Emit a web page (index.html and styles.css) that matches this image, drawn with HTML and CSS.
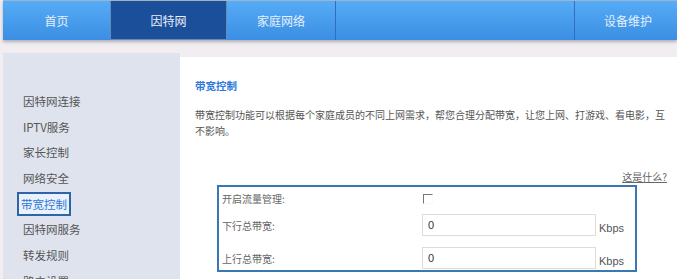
FILE: index.html
```html
<!DOCTYPE html>
<html lang="zh-CN">
<head>
<meta charset="utf-8">
<title>带宽控制</title>
<link rel="stylesheet" href="styles.css">
</head>
<body>
<div class="nav">
  <div class="tab t1">首页</div>
  <div class="tab t2 active">因特网</div>
  <div class="tab t3">家庭网络</div>
  <div class="tab spacer"></div>
  <div class="tab t4">设备维护</div>
</div>
<div class="main">
  <div class="side">
    <div class="item">因特网连接</div>
    <div class="item">IPTV服务</div>
    <div class="item">家长控制</div>
    <div class="item">网络安全</div>
    <div class="item"><span class="sel">带宽控制</span></div>
    <div class="item">因特网服务</div>
    <div class="item">转发规则</div>
    <div class="item">路由设置</div>
  </div>
  <div class="content">
    <div class="title">带宽控制</div>
    <div class="desc">带宽控制功能可以根据每个家庭成员的不同上网需求，帮您合理分配带宽，让您上网、打游戏、看电影，互不影响。</div>
    <div class="help"><a href="#">这是什么?</a></div>
    <div class="form">
      <div class="row r1">
        <div class="label">开启流量管理:</div>
        <span class="chk"></span>
      </div>
      <div class="row r2">
        <div class="label">下行总带宽:</div>
        <input class="inp" type="text" value="0">
        <span class="unit">Kbps</span>
      </div>
      <div class="row r3">
        <div class="label">上行总带宽:</div>
        <input class="inp" type="text" value="0">
        <span class="unit">Kbps</span>
      </div>
    </div>
  </div>
</div>
</body>
</html>
```

FILE: styles.css
```css
html, body {
  margin: 0;
  padding: 0;
  background: #f1edf1;
  font-family: "Noto Sans CJK SC", "Liberation Sans", sans-serif;
  overflow: hidden;
}
.nav {
  margin-left: 3px;
  height: 40px;
  display: flex;
  background: linear-gradient(#56acf6, #3b8ee3);
  border-top: 1px solid #9cb4cf;
  box-sizing: border-box;
  box-shadow: 0 2px 3px rgba(90, 100, 120, 0.45);
  position: relative;
}
.tab {
  color: #e6effc;
  font-size: 12px;
  display: flex;
  align-items: center;
  justify-content: center;
  height: 39px;
  box-sizing: border-box;
}
.t1 { width: 107px; }
.t2 { width: 117px; }
.t3 { border-right: 1px solid #2f6fbe; width: 109px; }
.spacer { width: 239px; border-right: 1px solid #2f6fbe; }
.t4 { flex: 1; padding-left: 4px; }
.active {
  background: #1c4f99;
  border: 1px solid #5a8cc8;
  border-top: none;
  box-shadow: inset 0 0 0 1px #234f8a;
}
.main {
  display: flex;
  margin-left: 3px;
  margin-top: 13px;
}
.side {
  width: 177px;
  background: #dfe3ee;
  padding-top: 35px;
  height: 226px;
  box-sizing: border-box;
  overflow: hidden;
  flex: none;
}
.item {
  height: 25.7px;
  display: flex;
  align-items: center;
  padding-left: 20px;
  font-size: 11.5px;
  color: #555;
}
.sel {
  margin-left: -6px;
  border: 2px solid #2f64a8;
  background: #e8f1fc;
  color: #2f76d6;
  padding: 1px 2px;
  line-height: 18px;
}
.content {
  flex: 1;
  background: #fff;
  margin-top: 4px;
  padding: 22px 10px 0 15px;
  height: 222px;
  box-sizing: border-box;
}
.title {
  color: #2a78de;
  font-size: 10.5px;
  font-weight: bold;
  line-height: 14px;
}
.desc {
  margin-top: 14px;
  font-size: 10px;
  line-height: 16px;
  color: #555;
}
.help {
  margin-top: 31px;
  text-align: right;
  font-size: 10px;
  line-height: 14px;
}
.help a {
  color: #666;
  text-decoration: underline;
}
.form {
  margin-top: 1px;
  margin-left: 22px;
  width: 420px;
  height: 87px;
  box-sizing: border-box;
  border: 2px solid #3a78b4;
  padding: 0 3px;
}
.row {
  display: flex;
  align-items: center;
}
.r1 { height: 22px; }
.r2 { padding-top: 5px; height: 22px; }
.r3 { padding-top: 11px; height: 22px; }
.label {
  width: 200px;
  font-size: 10px;
  color: #666;
  flex: none;
}
.chk {
  display: block;
  width: 8px;
  height: 8px;
  border-top: 1px solid #777;
  border-left: 1px solid #777;
  border-right: 1px solid #fafafa;
  border-bottom: 1px solid #fafafa;
  margin-left: 1px;
  margin-top: 2px;
}
.inp {
  width: 174px;
  height: 22px;
  box-sizing: border-box;
  border: 1px solid #dcdcdc;
  padding: 0 0 0 5px;
  margin: 0;
  font-family: "Liberation Sans", sans-serif;
  font-size: 11px;
  color: #333;
  outline: none;
}
.unit {
  margin-left: 3px;
  margin-top: 6px;
  font-family: "Liberation Sans", sans-serif;
  font-size: 11px;
  color: #555;
}
```
